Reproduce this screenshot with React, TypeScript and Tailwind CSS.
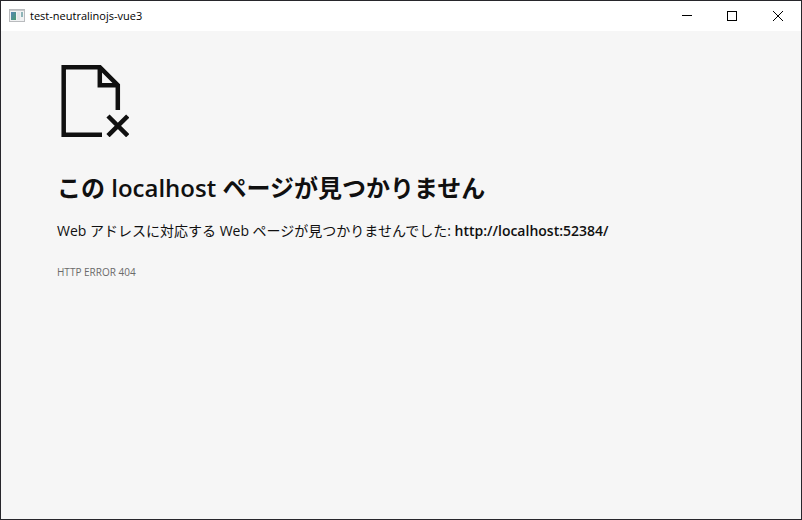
export default function App() {
  return (
    <div className="flex min-h-screen flex-col border border-[#27262b] bg-[#f6f6f6] font-['Open_Sans','Noto_Sans_CJK_JP',sans-serif] text-[#101010]">
      <header className="flex h-[30px] items-center bg-white">
        <svg className="ml-2 shrink-0" width="16" height="14" viewBox="0 0 16 14" aria-hidden="true">
          <defs>
            <linearGradient id="pane" x1="0" y1="0" x2="1" y2="1">
              <stop offset="0" stopColor="#5585b5" />
              <stop offset="1" stopColor="#4a9a70" />
            </linearGradient>
          </defs>
          <rect x="0.5" y="0.5" width="15" height="12" fill="#f1f2f3" stroke="#b9bbbe" />
          <path d="M1 1.5H15" stroke="#c6c8ca" />
          <rect x="2" y="3" width="5" height="8" fill="url(#pane)" />
          <rect x="8" y="3" width="3" height="8" fill="#e4e6e8" />
          <rect x="12" y="3" width="2" height="5" fill="#8fb5b8" />
        </svg>
        <div className="ml-[5px] flex-1 text-[11px] text-black">test-neutralinojs-vue3</div>
        <button aria-label="Minimize" className="flex h-full w-[45px] items-center justify-center">
          <svg width="10" height="10" viewBox="0 0 10 10" stroke="#000" shapeRendering="crispEdges"><path d="M0 4.5H10" /></svg>
        </button>
        <button aria-label="Maximize" className="flex h-full w-[45px] items-center justify-center">
          <svg width="10" height="10" viewBox="0 0 10 10" fill="none" stroke="#000" shapeRendering="crispEdges"><rect x="0.5" y="0.5" width="9" height="9" /></svg>
        </button>
        <button aria-label="Close" className="flex h-full w-[47px] items-center justify-center">
          <svg width="10" height="10" viewBox="0 0 10 10" stroke="#000"><path d="M0 0L10 10M10 0L0 10" /></svg>
        </button>
      </header>
      <main className="px-14 pt-[34px]">
        <svg width="72" height="72" viewBox="0 0 72 72" fill="none" stroke="#101010" strokeWidth="4.5" aria-hidden="true">
          <path d="M45 69.8H6.7V2.2H42.8L60.8 20.2V45M42.8 2.2V20.2H60.8" />
          <path d="M51 51L70.7 70.7M70.7 51L51 70.7" />
        </svg>
        <h1 className="mt-[35px] text-2xl font-semibold">この localhost ページが見つかりません</h1>
        <p className="mt-[17px] text-sm">Web アドレスに対応する Web ページが見つかりませんでした: <strong className="font-semibold">http://localhost:52384/</strong></p>
        <p className="mt-6 text-[10px] font-medium text-[#6b6b6b]">HTTP ERROR 404</p>
      </main>
    </div>
  );
}
